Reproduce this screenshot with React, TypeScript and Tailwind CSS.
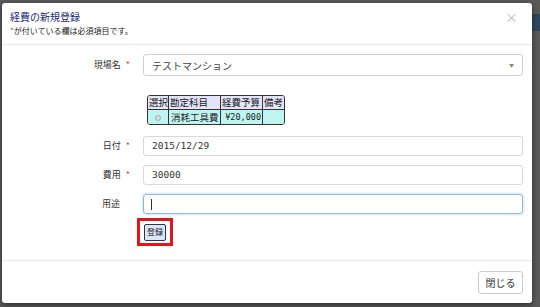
import React from 'react';

const Label = ({ text, required }: { text: string; required?: boolean }) => (
  <div className="w-[129px] shrink-0 text-right pr-[1px] text-[9px] text-[#333]">
    {text}
    {required ? <span className="text-[#e53935] ml-[5px]">*</span> : <span className="ml-[5px] inline-block w-[5px]" />}
  </div>
);

const App = () => {
  return (
    <div
      className="relative w-[540px] h-[307px] bg-[#5a5a5a] overflow-hidden"
      style={{ fontFamily: '"Noto Sans CJK JP", "Noto Sans", sans-serif' }}
    >
      <div className="absolute right-0 top-[14px] w-[10px] h-[17px] bg-[#2e4a5f]" />
      <div className="absolute left-[2px] top-[3px] w-[530px] h-[300px] bg-white rounded-[3px] shadow-[0_2px_6px_rgba(0,0,0,0.5)] flex flex-col">
        {/* header */}
        <div className="relative h-[42px] shrink-0 border-b border-[#e8e8e8] px-[8px] pt-[7px]">
          <div className="text-[10px] leading-[14px] text-[#1c2a7a]">経費の新規登録</div>
          <div className="text-[8px] leading-[12px] text-[#222] mt-[1px]">
            <span className="text-[#e53935]">*</span>が付いている欄は必須項目です。
          </div>
          <div className="absolute right-[14px] top-[7px] text-[13px] leading-[14px] text-[#bbb]">×</div>
        </div>

        {/* body */}
        <div className="flex-1 flex flex-col pt-[9px]">
          <div className="flex items-center h-[22px]">
            <Label text="現場名" required />
            <div className="ml-[12px] w-[380px] h-[22px] border border-[#d0d0d0] rounded-[3px] flex items-center justify-between px-[8px]">
              <span className="text-[10px] text-[#444]">テストマンション</span>
              <span className="text-[5px] text-[#888]">▼</span>
            </div>
          </div>

          <div className="ml-[145px] mt-[19px]">
            <table className="table-fixed w-[138px] whitespace-nowrap border-separate border-spacing-0 border border-[#333] rounded-[3px] overflow-hidden text-[9.5px] leading-[13px] text-[#222]">
              <colgroup>
                <col className="w-[21px]" />
                <col className="w-[52px]" />
                <col className="w-[42px]" />
                <col className="w-[21px]" />
              </colgroup>
              <tbody>
                <tr className="bg-[#e4e4f8]">
                  <td className="pl-[1px] border-r border-b border-[#333]">選択</td>
                  <td className="pl-[1px] border-r border-b border-[#333]">勘定科目</td>
                  <td className="pl-[1px] border-r border-b border-[#333]">経費予算</td>
                  <td className="pl-[1px] border-b border-[#333]">備考</td>
                </tr>
                <tr className="bg-[#bff5f0] h-[14px]">
                  <td className="border-r border-[#333] text-center">
                    <span className="inline-block w-[6px] h-[6px] rounded-full border border-[#aaa] bg-[#ddd] align-middle" />
                  </td>
                  <td className="pl-[2px] border-r border-[#333]">消耗工具費</td>
                  <td
                    className="pr-[1px] border-r border-[#333] text-right text-[8.5px]"
                    style={{ fontFamily: '"DejaVu Sans Mono", monospace' }}
                  >
                    ¥20,000
                  </td>
                  <td />
                </tr>
              </tbody>
            </table>
          </div>

          <div className="flex items-center h-[20px] mt-[11px]">
            <Label text="日付" required />
            <div className="ml-[12px] w-[380px] h-[20px] border border-[#d8d8d8] rounded-[3px] flex items-center px-[8px]">
              <span className="text-[9.5px] text-[#333]" style={{ fontFamily: '"DejaVu Sans Mono", monospace' }}>2015/12/29</span>
            </div>
          </div>

          <div className="flex items-center h-[20px] mt-[9px]">
            <Label text="費用" required />
            <div className="ml-[12px] w-[380px] h-[20px] border border-[#d8d8d8] rounded-[3px] flex items-center px-[8px]">
              <span className="text-[9.5px] text-[#333]" style={{ fontFamily: '"DejaVu Sans Mono", monospace' }}>30000</span>
            </div>
          </div>

          <div className="flex items-center h-[20px] mt-[9px]">
            <Label text="用途" />
            <div className="ml-[12px] w-[380px] h-[20px] border border-[#8cb8e6] rounded-[3px] shadow-[0_0_3px_rgba(102,175,233,0.6)] flex items-center px-[7px]">
              <span className="w-[1px] h-[11px] bg-[#333]" />
            </div>
          </div>

          <div className="ml-[135px] mt-[4px] w-[36px] h-[28px] border-[3px] border-[#e0161e] flex items-center justify-center">
            <div className="w-[22px] h-[17px] bg-[#dbe6fb] border border-[#334] rounded-[2px] flex items-center justify-center text-[8px] text-[#223]">
              登録
            </div>
          </div>
        </div>

        {/* footer */}
        <div className="h-[43px] shrink-0 border-t border-[#e8e8e8] flex items-center justify-end pr-[9px]">
          <div className="w-[45px] h-[23px] border border-[#ccc] rounded-[3px] flex items-center justify-center text-[10px] text-[#333]">
            閉じる
          </div>
        </div>
      </div>
    </div>
  );
};

export default App;
